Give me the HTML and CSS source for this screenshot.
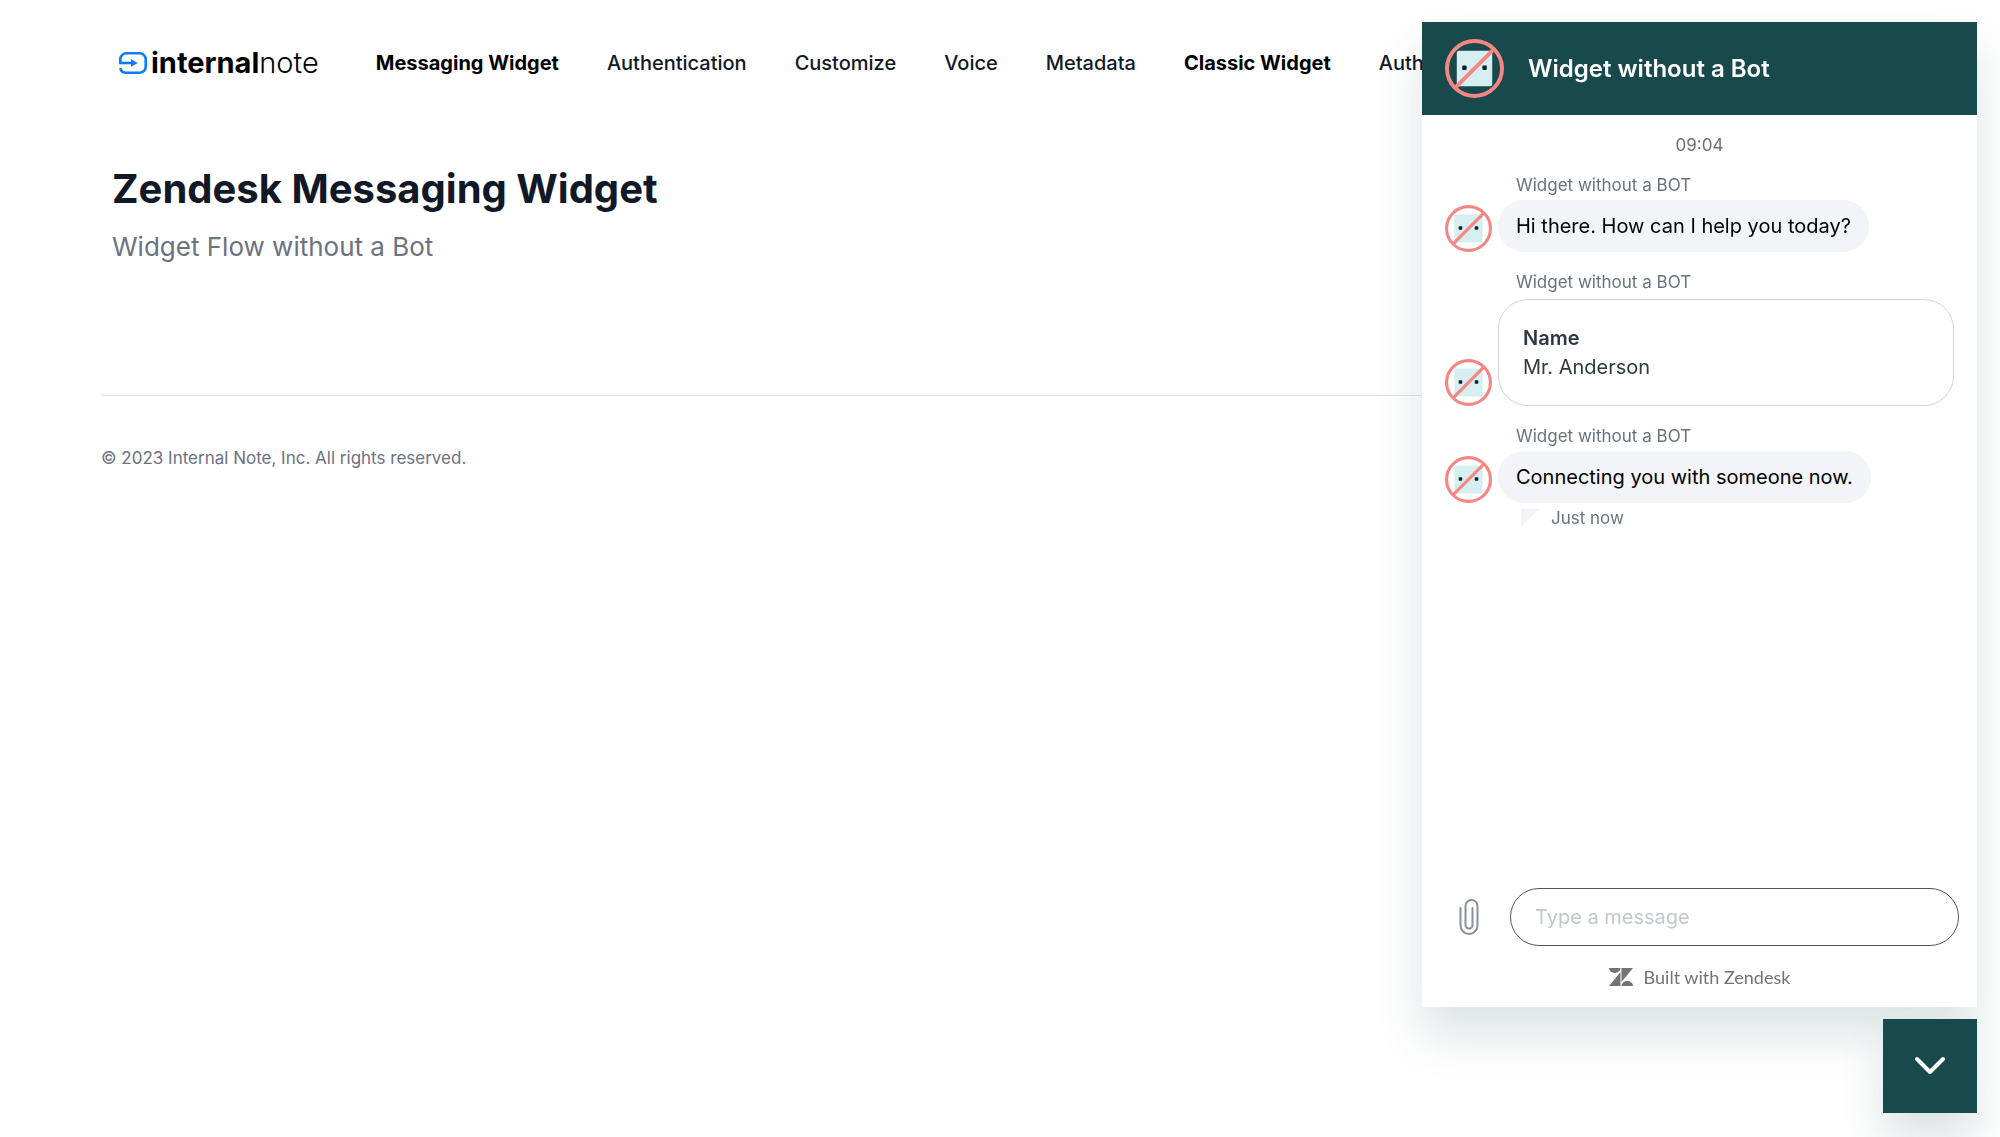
FILE: index.html
```html
<!DOCTYPE html>
<html lang="en">
<head>
    <meta charset="UTF-8">
    <meta name="viewport" content="width=device-width, initial-scale=1.0">
    <title>Internal Note - Zendesk Messaging Widget</title>
    <link rel="stylesheet" href="styles.css">
</head>
<body>
    <!-- Avatar shared by the widget header and every message -->
    <svg class="sprite" aria-hidden="true">
        <symbol id="no-bot" viewBox="0 0 60 60">
            <rect x="12" y="12" width="36" height="36" rx="2" fill="#d6eef0"/>
            <rect x="17.500" y="27" width="4.500" height="4.500" rx="1" fill="#03242b"/>
            <rect x="38" y="27" width="4.500" height="4.500" rx="1" fill="#03242b"/>
            <circle cx="30" cy="30" r="28" fill="none" stroke="#f48683" stroke-width="4"/>
            <path d="M10.5 49.5L49.5 10.5" stroke="#f48683" stroke-width="4"/>
        </symbol>
    </svg>

    <header class="site-header">
        <a class="logo" href="#">
            <svg class="logo-icon" viewBox="0 0 28 22" fill="none" stroke="#0a7cff" stroke-width="2.6">
                <path d="M1.3 10.8V7.3a6 6 0 0 1 6-6H20.7a6 6 0 0 1 6 6V14.7a6 6 0 0 1-6 6H6.3c-2.6 0-4.4-1.6-5-4.6"/>
                <path d="M0 11H13"/>
                <path d="M12 7.2L18.8 11L12 14.8Z" fill="#0a7cff" stroke="none"/>
            </svg>
            <span class="logo-text"><b>internal</b>note</span>
        </a>
        <nav>
            <ul class="nav-list">
                <li><a class="nav-strong" href="#">Messaging Widget</a></li>
                <li><a href="#">Authentication</a></li>
                <li><a href="#">Customize</a></li>
                <li><a href="#">Voice</a></li>
                <li><a href="#">Metadata</a></li>
                <li><a class="nav-strong" href="#">Classic Widget</a></li>
                <li><a href="#">Authentication</a></li>
            </ul>
        </nav>
    </header>

    <main class="intro">
        <h1>Zendesk Messaging Widget</h1>
        <p>Widget Flow without a Bot</p>
    </main>

    <footer class="site-footer">
        <p>© 2023 Internal Note, Inc. All rights reserved.</p>
    </footer>

    <div class="messenger">
        <section class="widget" aria-label="Messaging">
            <header class="widget-header">
                <svg class="widget-avatar"><use href="#no-bot"/></svg>
                <h2>Widget without a Bot</h2>
            </header>

            <div class="conversation">
                <time class="timestamp">09:04</time>

                <div class="message">
                    <span class="sender">Widget without a BOT</span>
                    <svg class="avatar"><use href="#no-bot"/></svg>
                    <p class="bubble">Hi there. How can I help you today?</p>
                </div>

                <div class="message">
                    <span class="sender">Widget without a BOT</span>
                    <svg class="avatar"><use href="#no-bot"/></svg>
                    <dl class="form-card">
                        <dt>Name</dt>
                        <dd>Mr. Anderson</dd>
                    </dl>
                </div>

                <div class="message">
                    <span class="sender">Widget without a BOT</span>
                    <svg class="avatar"><use href="#no-bot"/></svg>
                    <p class="bubble">Connecting you with someone now.</p>
                    <div class="receipt">
                        <svg class="tail" viewBox="0 0 18 18"><path d="M0 0H18L0 18Z" fill="#f3f4f7"/></svg>
                        <span>Just now</span>
                    </div>
                </div>
            </div>

            <form class="composer">
                <button class="attach" type="button" aria-label="Attach a file">
                    <svg viewBox="0 0 20 36" fill="none" stroke="#87929d" stroke-width="2" stroke-linecap="round">
                        <path d="M1.500 9V26.500a8.500 8.500 0 0 0 17 0V7a6 6 0 0 0-12 0V26a3.500 3.500 0 0 0 7 0V9"/>
                    </svg>
                </button>
                <input class="message-input" type="text" placeholder="Type a message" aria-label="Type a message">
            </form>

            <a class="built-with" href="#">
                <svg viewBox="0 0 24 18" fill="#737373">
                    <path d="M0 0H11.500A5.750 5 0 0 1 0 0Z"/>
                    <path d="M11.500 4V18H0Z"/>
                    <path d="M12.500 0H24L12.500 14Z"/>
                    <path d="M12.500 18A5.750 5 0 0 1 24 18Z"/>
                </svg>
                <span>Built with Zendesk</span>
            </a>
        </section>

        <button class="launcher" type="button" aria-label="Close messaging window">
            <svg viewBox="0 0 32 20" fill="none" stroke="#fff" stroke-width="4" stroke-linecap="round" stroke-linejoin="round">
                <path d="M3 3L16 16L29 3"/>
            </svg>
        </button>
    </div>
</body>
</html>
```

FILE: styles.css
```css
:root {
    --brand: #17494d;
    --text: #111827;
    --muted: #6b7280;
    --widget-muted: #68737d;
    --bubble: #f3f4f7;
    --shadow: 0 28px 44px rgba(23, 73, 77, 0.15);
}

* {
    box-sizing: border-box;
}

body {
    margin: 0;
    font-family: Inter, "Liberation Sans", sans-serif;
    font-size: 20px;
    color: var(--text);
    background: #fff;
}

a {
    color: inherit;
    text-decoration: none;
}

h1, h2, p, ul, dl, dd {
    margin: 0;
    padding: 0;
}

.sprite {
    display: block;
    width: 0;
    height: 0;
}

/* Page */
.site-header {
    display: flex;
    align-items: center;
    gap: 57px;
    height: 125px;
    padding: 0 119px;
    white-space: nowrap;
}

.logo {
    display: flex;
    align-items: center;
    gap: 4px;
    color: #000;
}

.logo-icon {
    width: 28px;
    height: 22px;
}

.logo-text {
    font-size: 29px;
    font-weight: 300;
}

.logo-text b {
    font-weight: 700;
}

.nav-list {
    display: flex;
    gap: 48px;
    list-style: none;
    font-weight: 500;
}

.nav-strong {
    color: #000;
    font-weight: 700;
}

.intro {
    padding: 35px 112px 119px;
}

.intro h1 {
    font-size: 40px;
    line-height: 58px;
}

.intro p {
    font-size: 26px;
    line-height: 58px;
    color: var(--muted);
}

.site-footer {
    margin: 0 101px;
    padding: 46px 0;
    border-top: 1px solid #e0e2e6;
    font-size: 17px;
    line-height: 32px;
    color: var(--muted);
}

/* Messenger overlay */
.messenger {
    position: fixed;
    top: 22px;
    right: 23px;
    bottom: 24px;
    display: flex;
    flex-direction: column;
    align-items: flex-end;
    gap: 12px;
    width: 555px;
}

.widget {
    display: flex;
    flex: 1;
    flex-direction: column;
    width: 100%;
    background: #fff;
    box-shadow: var(--shadow);
}

.widget-header {
    display: flex;
    align-items: center;
    gap: 24px;
    padding: 17px 23px;
    color: #fff;
    background: var(--brand);
}

.widget-avatar {
    width: 59px;
    height: 59px;
}

.widget-header h2 {
    font-size: 24px;
    font-weight: 600;
}

.conversation {
    display: flex;
    flex: 1;
    flex-direction: column;
    gap: 15px;
    padding: 15px 23px;
}

.timestamp,
.sender,
.receipt {
    font-size: 17px;
    line-height: 30px;
    color: var(--widget-muted);
}

.timestamp {
    margin-bottom: -5px;
    text-align: center;
}

.message {
    display: grid;
    grid-template-columns: 47px 1fr;
    column-gap: 6px;
    align-items: end;
    justify-items: start;
}

.sender,
.receipt {
    grid-column: 2;
    padding-left: 18px;
}

.avatar {
    width: 47px;
    height: 47px;
}

.bubble {
    padding: 11px 18px;
    border-radius: 26px;
    line-height: 30px;
    color: #000;
    background: var(--bubble);
}

.form-card {
    width: 100%;
    margin-top: 2px;
    padding: 24px 24px 23px;
    border: 1px solid #d0d6d8;
    border-radius: 30px;
    line-height: 29px;
    color: #2f3941;
}

.form-card dt {
    font-weight: 600;
}

.receipt {
    display: flex;
    align-items: center;
    gap: 12px;
    padding-left: 23px;
}

.tail {
    width: 18px;
    height: 18px;
}

.composer {
    display: flex;
    align-items: center;
    gap: 12px;
    padding: 0 18px;
}

.attach {
    display: flex;
    justify-content: center;
    width: 58px;
    padding: 0;
    border: 0;
    background: none;
    cursor: pointer;
}

.attach svg {
    width: 20px;
    height: 36px;
}

.message-input {
    flex: 1;
    min-width: 0;
    height: 58px;
    padding: 0 24px;
    border: 1px solid #555;
    border-radius: 29px;
    font: inherit;
    color: #2f3941;
    background: #fff;
}

.message-input::placeholder {
    color: #c2c8cc;
    opacity: 1;
}

.built-with {
    display: flex;
    align-items: center;
    justify-content: center;
    gap: 11px;
    height: 61px;
    font-family: Lato, sans-serif;
    font-size: 18px;
    color: #737373;
}

.built-with svg {
    width: 24px;
    height: 18px;
}

.launcher {
    display: flex;
    align-items: center;
    justify-content: center;
    width: 94px;
    height: 94px;
    padding: 0;
    border: 0;
    background: var(--brand);
    box-shadow: var(--shadow);
    cursor: pointer;
}

.launcher svg {
    width: 32px;
    height: 20px;
}
```
